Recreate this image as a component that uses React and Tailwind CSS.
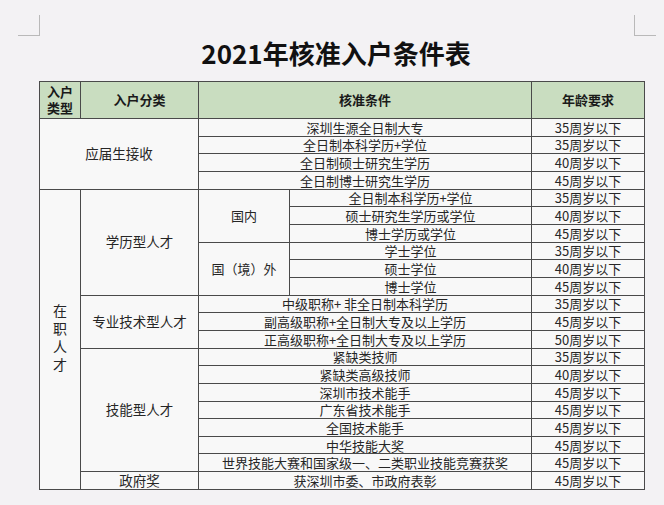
import React from "react";

const B = "border border-[#4a4a4a]";
const td = `${B} text-center align-middle p-0 h-[17.67px] leading-none text-[13px] text-[#262626]`;
const cat = `${B} text-center align-middle p-0 leading-none text-[13.5px] text-[#262626]`;

function Age({ v }) {
  return <td className={td}>{v}周岁以下</td>;
}

export default function App() {
  return (
    <div
      className="relative w-[664px] h-[505px] bg-[#f3f2f4] overflow-hidden"
      style={{ fontFamily: '"Noto Sans CJK SC", "Noto Sans", sans-serif' }}
    >
      {/* corner marks */}
      <div className="absolute left-[18px] top-[15px] w-[22px] h-[21px] border-r border-b border-[#b9b9b9]" />
      <div className="absolute left-[634px] top-[15px] w-[22px] h-[21px] border-l border-b border-[#b9b9b9]" />

      <div className="pt-[38px] flex flex-col items-center">
        <h1 className="text-[26px] leading-[30px] font-bold text-[#111] ml-[8px]">
          2021年核准入户条件表
        </h1>
      </div>
      <div className="pl-[39px] pt-[13px]">
        <table className="table-fixed border-collapse w-[605px] bg-[#f8f8f8]">
          <colgroup>
            <col className="w-[41px]" />
            <col className="w-[118px]" />
            <col className="w-[91px]" />
            <col className="w-[242px]" />
            <col className="w-[113px]" />
          </colgroup>
          <tbody>
            <tr className="bg-[#c9ddc0]">
              <td className={`${B} h-[37px] text-center align-middle p-0 text-[13px] font-bold text-[#1a1a1a]`}>
                <div className="mx-auto w-[26px] leading-[16px]">入户类型</div>
              </td>
              <td className={`${B} h-[37px] text-center align-middle p-0 text-[13px] font-bold text-[#1a1a1a]`}>入户分类</td>
              <td colSpan={2} className={`${B} h-[37px] text-center align-middle p-0 text-[13px] font-bold text-[#1a1a1a]`}>核准条件</td>
              <td className={`${B} h-[37px] text-center align-middle p-0 text-[13px] font-bold text-[#1a1a1a]`}>年龄要求</td>
            </tr>

            <tr>
              <td colSpan={2} rowSpan={4} className={cat}>应届生接收</td>
              <td colSpan={2} className={td}>深圳生源全日制大专</td>
              <Age v={35} />
            </tr>
            <tr>
              <td colSpan={2} className={td}>全日制本科学历+学位</td>
              <Age v={35} />
            </tr>
            <tr>
              <td colSpan={2} className={td}>全日制硕士研究生学历</td>
              <Age v={40} />
            </tr>
            <tr>
              <td colSpan={2} className={td}>全日制博士研究生学历</td>
              <Age v={45} />
            </tr>

            <tr>
              <td rowSpan={17} className={cat}>
                <div className="flex justify-center pt-[2px]">
                  <span className="[writing-mode:vertical-rl] tracking-[4px] text-[14px] leading-[16px]">在职人才</span>
                </div>
              </td>
              <td rowSpan={6} className={cat}>学历型人才</td>
              <td rowSpan={3} className={td}>国内</td>
              <td className={td}>全日制本科学历+学位</td>
              <Age v={35} />
            </tr>
            <tr>
              <td className={td}>硕士研究生学历或学位</td>
              <Age v={40} />
            </tr>
            <tr>
              <td className={td}>博士学历或学位</td>
              <Age v={45} />
            </tr>
            <tr>
              <td rowSpan={3} className={td}>国（境）外</td>
              <td className={td}>学士学位</td>
              <Age v={35} />
            </tr>
            <tr>
              <td className={td}>硕士学位</td>
              <Age v={40} />
            </tr>
            <tr>
              <td className={td}>博士学位</td>
              <Age v={45} />
            </tr>

            <tr>
              <td rowSpan={3} className={cat}>专业技术型人才</td>
              <td colSpan={2} className={td}>中级职称+ 非全日制本科学历</td>
              <Age v={35} />
            </tr>
            <tr>
              <td colSpan={2} className={td}>副高级职称+全日制大专及以上学历</td>
              <Age v={45} />
            </tr>
            <tr>
              <td colSpan={2} className={td}>正高级职称+全日制大专及以上学历</td>
              <Age v={50} />
            </tr>

            <tr>
              <td rowSpan={7} className={cat}>技能型人才</td>
              <td colSpan={2} className={td}>紧缺类技师</td>
              <Age v={35} />
            </tr>
            <tr>
              <td colSpan={2} className={td}>紧缺类高级技师</td>
              <Age v={40} />
            </tr>
            <tr>
              <td colSpan={2} className={td}>深圳市技术能手</td>
              <Age v={45} />
            </tr>
            <tr>
              <td colSpan={2} className={td}>广东省技术能手</td>
              <Age v={45} />
            </tr>
            <tr>
              <td colSpan={2} className={td}>全国技术能手</td>
              <Age v={45} />
            </tr>
            <tr>
              <td colSpan={2} className={td}>中华技能大奖</td>
              <Age v={45} />
            </tr>
            <tr>
              <td colSpan={2} className={td}>世界技能大赛和国家级一、二类职业技能竞赛获奖</td>
              <Age v={45} />
            </tr>

            <tr>
              <td className={cat}>政府奖</td>
              <td colSpan={2} className={td}>获深圳市委、市政府表彰</td>
              <Age v={45} />
            </tr>
          </tbody>
        </table>
      </div>
    </div>
  );
}
